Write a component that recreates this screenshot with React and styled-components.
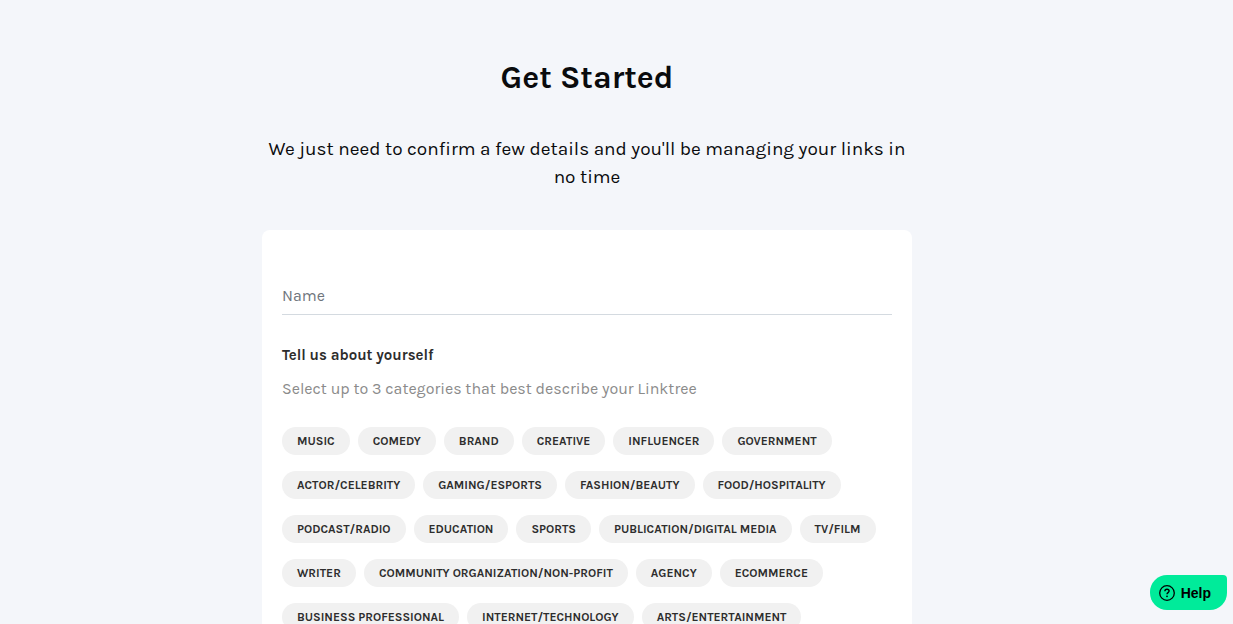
import React, { useState } from "react";
import styled, { createGlobalStyle } from "styled-components";

const MAX_CATEGORIES = 3;

const categories = [
  "Music",
  "Comedy",
  "Brand",
  "Creative",
  "Influencer",
  "Government",
  "Actor/Celebrity",
  "Gaming/eSports",
  "Fashion/Beauty",
  "Food/Hospitality",
  "Podcast/Radio",
  "Education",
  "Sports",
  "Publication/Digital Media",
  "TV/Film",
  "Writer",
  "Community Organization/Non-profit",
  "Agency",
  "Ecommerce",
  "Business Professional",
  "Internet/Technology",
  "Arts/Entertainment"
];

const HelpIcon = () => (
  <svg width="18" height="18" viewBox="0 0 18 18" fill="none" aria-hidden="true">
    <circle cx="9" cy="9" r="7.3" stroke="currentColor" strokeWidth="1.3" />
    <path
      d="M6.9 7.3c0-1.2.9-2 2.1-2s2.1.8 2.1 1.8c0 1.5-2.1 1.6-2.1 3.1"
      stroke="currentColor"
      strokeWidth="1.4"
      strokeLinejoin="round"
    />
    <circle cx="9" cy="12.3" r="0.9" fill="currentColor" />
  </svg>
);

const App = () => {
  const [name, setName] = useState("");
  const [selected, setSelected] = useState([]);

  const toggle = category => {
    if (selected.includes(category)) {
      setSelected(selected.filter(item => item !== category));
    } else if (selected.length < MAX_CATEGORIES) {
      setSelected([...selected, category]);
    }
  };

  return (
    <>
      <GlobalStyle />
      <Page>
        <Content>
          <Title>Get Started</Title>
          <Intro>
            We just need to confirm a few details and you'll be managing your
            links in no time
          </Intro>
          <Card>
            <NameInput
              type="text"
              name="name"
              aria-label="Name"
              placeholder="Name"
              value={name}
              onChange={e => setName(e.target.value)}
            />
            <SectionTitle id="about">Tell us about yourself</SectionTitle>
            <Hint>
              Select up to {MAX_CATEGORIES} categories that best describe your
              Linktree
            </Hint>
            <Pills role="group" aria-labelledby="about">
              {categories.map(category => (
                <Pill
                  key={category}
                  type="button"
                  $active={selected.includes(category)}
                  aria-pressed={selected.includes(category)}
                  onClick={() => toggle(category)}
                >
                  {category}
                </Pill>
              ))}
            </Pills>
          </Card>
        </Content>
      </Page>
      <HelpButton type="button">
        <HelpIcon />
        Help
      </HelpButton>
    </>
  );
};

export default App;

const GlobalStyle = createGlobalStyle`
  *, *::before, *::after {
    box-sizing: border-box;
  }
  body {
    margin: 0;
    background: #f4f6fa;
    color: #0a0b0d;
    font-family: Karla, Inter, sans-serif;
    -webkit-font-smoothing: antialiased;
  }
  h1, h2, p {
    margin: 0;
  }
  button, input {
    font-family: inherit;
  }
`;
const Page = styled.main`
  display: flex;
  justify-content: center;
  padding: 56px 59px 60px 0;
`;
const Content = styled.div`
  width: 100%;
  max-width: 650px;
`;
const Title = styled.h1`
  font-size: 32px;
  line-height: 44px;
  font-weight: 700;
  text-align: center;
`;
const Intro = styled.p`
  margin-top: 35px;
  font-size: 19px;
  line-height: 28px;
  text-align: center;
`;
const Card = styled.section`
  margin-top: 39px;
  padding: 48px 20px 24px;
  border-radius: 8px;
  background: #fff;
`;
const NameInput = styled.input`
  display: block;
  width: 100%;
  height: 37px;
  padding: 0 0 2px;
  border: 0;
  border-bottom: 1px solid #d4dae0;
  background: transparent;
  color: #2d2d2d;
  font-size: 16px;
  outline: none;

  &::placeholder {
    color: #6f757d;
    opacity: 1;
  }
  &:focus {
    border-color: #2d2d2d;
  }
`;
const SectionTitle = styled.h2`
  margin-top: 28px;
  color: #2d2d2d;
  font-size: 15px;
  line-height: 24px;
  font-weight: 700;
`;
const Hint = styled.p`
  margin-top: 10px;
  color: #8b8b8b;
  font-size: 16px;
  line-height: 24px;
`;
const Pills = styled.div`
  display: flex;
  flex-wrap: wrap;
  gap: 16px 8px;
  margin-top: 26px;
`;
const Pill = styled.button`
  height: 28px;
  padding: 0 15px;
  border: 0;
  border-radius: 14px;
  background: ${({ $active }) => ($active ? "#2d2d2d" : "#f1f1f1")};
  color: ${({ $active }) => ($active ? "#fff" : "#2d2d2d")};
  font-size: 12px;
  font-weight: 700;
  text-transform: uppercase;
  cursor: pointer;
`;
const HelpButton = styled.button`
  position: fixed;
  right: 6px;
  bottom: 14px;
  display: flex;
  align-items: center;
  gap: 5px;
  height: 35px;
  padding: 0 16px 0 8px;
  border: 0;
  border-radius: 17px 4px 17px 17px;
  background: #00eb9a;
  color: #000;
  font-family: "Liberation Sans", Helvetica, Arial, sans-serif;
  font-size: 14px;
  font-weight: 700;
  cursor: pointer;
`;
